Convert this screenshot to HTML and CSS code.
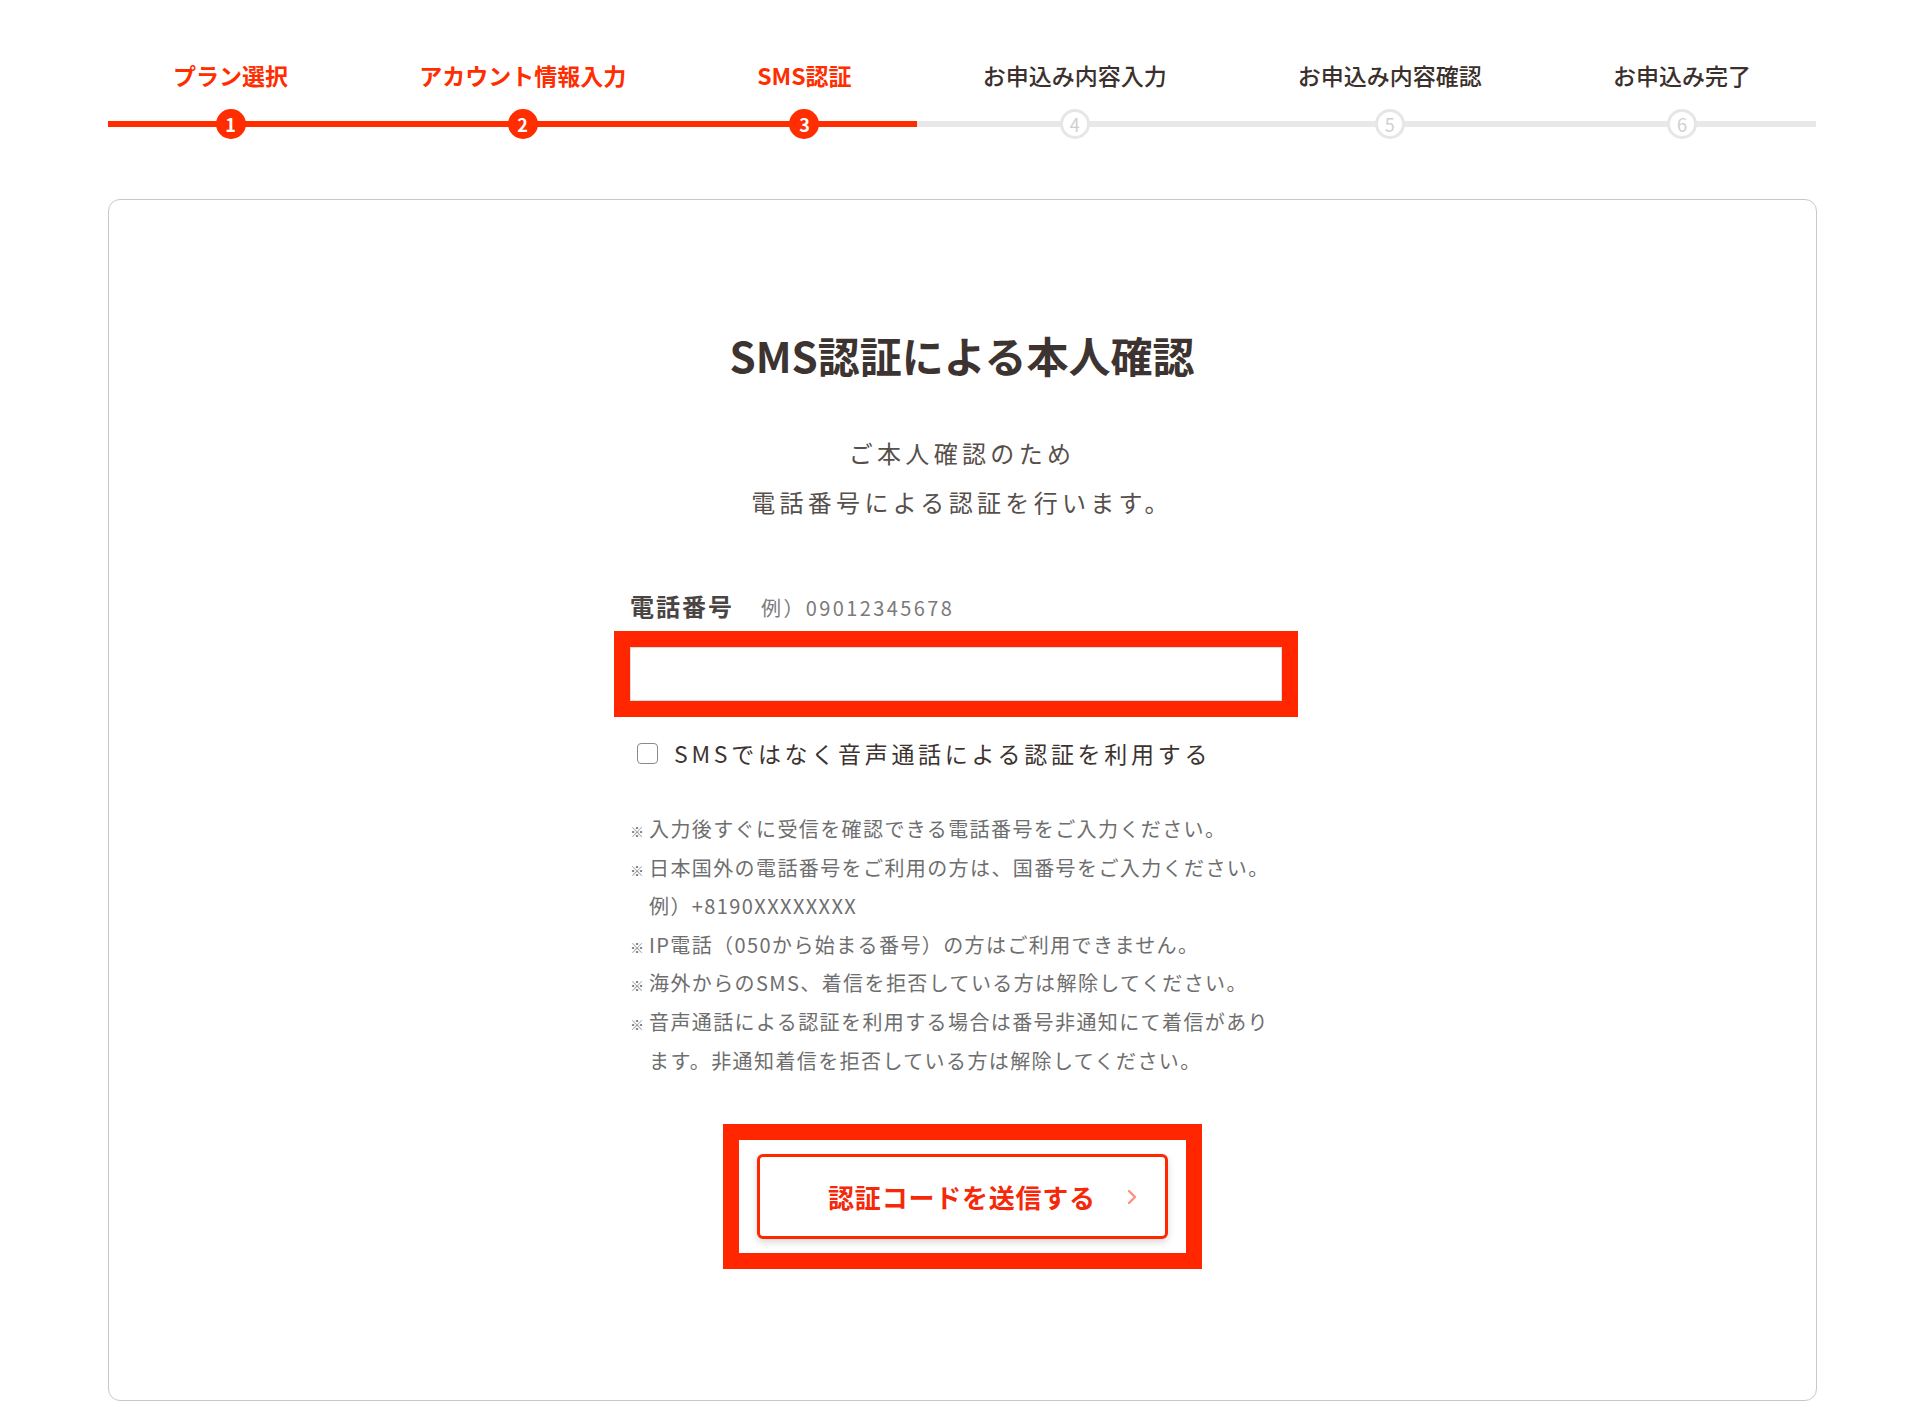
FILE: index.html
```html
<!DOCTYPE html>
<html lang="ja">
<head>
    <meta charset="UTF-8">
    <meta name="viewport" content="width=device-width, initial-scale=1.0">
    <title>SMS認証による本人確認</title>
    <link rel="stylesheet" href="styles.css">
</head>
<body>

<div class="page">
    <ol class="steps">
        <li class="step is-done">
            <span class="step-label">プラン選択</span>
            <span class="step-track"><span class="step-num">1</span></span>
        </li>
        <li class="step is-done">
            <span class="step-label">アカウント情報入力</span>
            <span class="step-track"><span class="step-num">2</span></span>
        </li>
        <li class="step is-done">
            <span class="step-label">SMS認証</span>
            <span class="step-track"><span class="step-num">3</span></span>
        </li>
        <li class="step">
            <span class="step-label">お申込み内容入力</span>
            <span class="step-track"><span class="step-num">4</span></span>
        </li>
        <li class="step">
            <span class="step-label">お申込み内容確認</span>
            <span class="step-track"><span class="step-num">5</span></span>
        </li>
        <li class="step">
            <span class="step-label">お申込み完了</span>
            <span class="step-track"><span class="step-num">6</span></span>
        </li>
    </ol>

    <div class="card">
        <h1 class="card-title">SMS認証による本人確認</h1>

        <p class="lead">ご本人確認のため<br>電話番号による認証を行います。</p>

        <form class="form" id="smsForm">
            <div class="field-head">
                <label for="phone" class="field-label">電話番号</label>
                <span class="field-example">例）09012345678</span>
            </div>
            <input type="tel" id="phone" class="field-input">

            <label class="check">
                <input type="checkbox" class="check-box">
                <span>SMSではなく音声通話による認証を利用する</span>
            </label>

            <ul class="notes">
                <li><span class="mark">※</span>入力後すぐに受信を確認できる電話番号をご入力ください。</li>
                <li><span class="mark">※</span>日本国外の電話番号をご利用の方は、国番号をご入力ください。<br>例）+8190XXXXXXXX</li>
                <li><span class="mark">※</span>IP電話（050から始まる番号）の方はご利用できません。</li>
                <li><span class="mark">※</span>海外からのSMS、着信を拒否している方は解除してください。</li>
                <li><span class="mark">※</span>音声通話による認証を利用する場合は番号非通知にて着信があります。非通知着信を拒否している方は解除してください。</li>
            </ul>
        </form>

        <div class="highlight">
            <button type="submit" form="smsForm" class="send-btn">
                認証コードを送信する
                <svg class="send-arrow" width="10" height="16" viewBox="0 0 10 16">
                    <path d="M2 2 L8 8 L2 14" fill="none" stroke="currentColor" stroke-width="2.4" stroke-linecap="round" stroke-linejoin="round"/>
                </svg>
            </button>
        </div>
    </div>
</div>

<script>
    document.getElementById('smsForm').addEventListener('submit', (e) => {
        e.preventDefault();
    });
</script>

</body>
</html>
```

FILE: styles.css
```css
/* Page */
body {
    margin: 0;
    background: #fff;
    font-family: "Noto Sans CJK JP", "Noto Sans", sans-serif;
    color: #3d3330;
}

.page {
    width: 1709px;
    margin: 0 auto;
    padding-top: 58px;
    padding-bottom: 20px;
}

/* Stepper */
.steps {
    display: flex;
    list-style: none;
    margin: 0;
    padding: 0;
}

.step {
    flex: 1 1 auto;
    display: flex;
    flex-direction: column;
    align-items: center;
}

.step-label {
    font-size: 23px;
    line-height: 34px;
    font-weight: 500;
    color: #3b302c;
    white-space: nowrap;
}

.step.is-done .step-label {
    color: #ff2d00;
    font-weight: 700;
}

.step-track {
    position: relative;
    align-self: stretch;
    display: flex;
    justify-content: center;
    height: 30px;
    margin-top: 17px;
}

.step-track::before {
    content: "";
    position: absolute;
    left: 0;
    right: 0;
    top: 12px;
    height: 6px;
    background: #e8e8e8;
}

.step.is-done .step-track::before {
    background: #ff2d00;
}

.step-num {
    position: relative;
    width: 30px;
    height: 30px;
    box-sizing: border-box;
    border-radius: 50%;
    border: 3px solid #e6e6e6;
    background: #fff;
    color: #cfcfcf;
    font-size: 18px;
    line-height: 24px;
    text-align: center;
}

.step.is-done .step-num {
    border: none;
    background: #ff2d00;
    color: #fff;
    font-weight: 700;
    line-height: 30px;
}

/* Card */
.card {
    margin-top: 60px;
    border: 1px solid #c8c8c8;
    border-radius: 12px;
    padding: 125px 0 131px;
    text-align: center;
}

.card-title {
    margin: 0;
    font-size: 42px;
    line-height: 59px;
    font-weight: 700;
    color: #3d3330;
}

.lead {
    margin: 44px 0 0;
    font-size: 24px;
    line-height: 49px;
    letter-spacing: 0.18em;
    color: #574f4c;
}

/* Form */
.form {
    width: 664px;
    padding-right: 12px;
    box-sizing: border-box;
    margin: 63px auto 0;
    text-align: left;
}

.field-head {
    display: flex;
    align-items: baseline;
    line-height: 34px;
}

.field-label {
    font-size: 24px;
    font-weight: 700;
    letter-spacing: 2px;
    color: #4a4443;
}

.field-example {
    margin-left: 27px;
    font-size: 20px;
    letter-spacing: 0.12em;
    color: #7a7a7a;
}

.field-input {
    display: block;
    width: 100%;
    height: 54px;
    box-sizing: border-box;
    margin-top: 22px;
    border: 1px solid #dcdcdc;
    background: #fff;
    font-size: 22px;
    padding: 0 14px;
    outline: 16px solid #ff2600;
}

.check {
    display: flex;
    align-items: center;
    margin-top: 35px;
    padding-left: 7px;
    font-size: 23px;
    line-height: 34px;
    letter-spacing: 3.7px;
    color: #3d3330;
}

.check-box {
    appearance: none;
    width: 21px;
    height: 21px;
    margin: 0 16px 0 0;
    border: 1.5px solid #8a8a8a;
    border-radius: 4px;
    background: #fff;
}

.notes {
    list-style: none;
    margin: 40px 0 0;
    padding: 0;
    font-size: 20px;
    line-height: 38.6px;
    letter-spacing: 1.4px;
    color: #6e6e6e;
}

.notes li {
    padding-left: 19px;
}

.notes .mark {
    display: inline-block;
    width: 19px;
    margin-left: -19px;
    font-size: 14px;
    line-height: 1;
    letter-spacing: 0;
}

/* Send button with the marker frame round it */
.highlight {
    display: inline-block;
    margin-top: 44px;
    padding: 14px 18px;
    border: 16px solid #ff2600;
}

.send-btn {
    position: relative;
    display: block;
    width: 411px;
    height: 85px;
    border: 3px solid #ff2600;
    border-radius: 6px;
    background: #fff;
    box-shadow: 0 3px 7px rgba(0, 0, 0, 0.16);
    color: #f5290a;
    font-family: inherit;
    font-size: 26px;
    font-weight: 700;
    letter-spacing: 0.03em;
    cursor: pointer;
}

.send-arrow {
    position: absolute;
    right: 28px;
    top: 50%;
    margin-top: -8px;
    color: #ff9080;
}
```
